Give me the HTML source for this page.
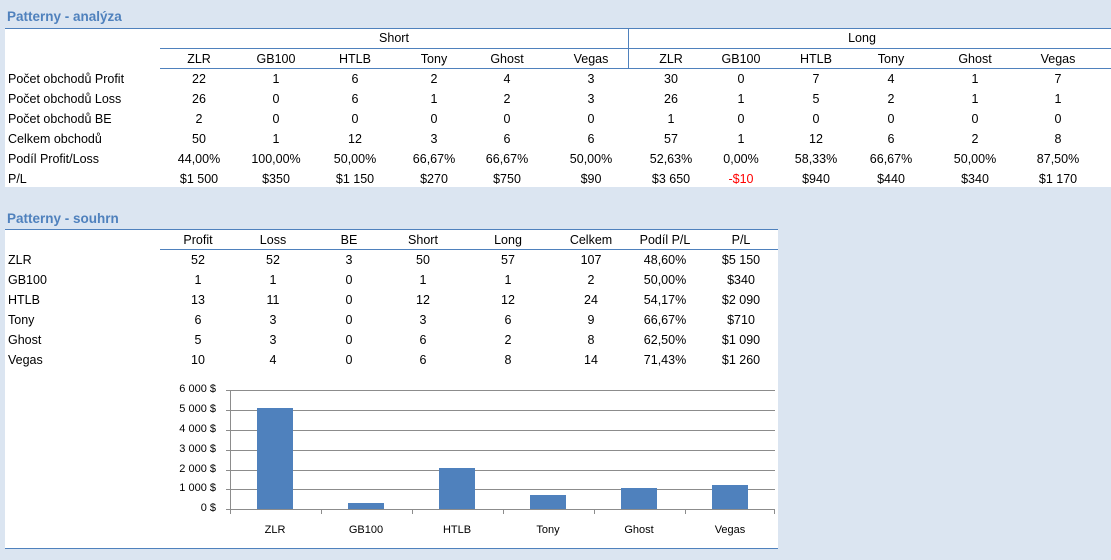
<!DOCTYPE html><html><head><meta charset="utf-8"><style>
body{margin:0;width:1111px;height:560px;background:#dbe5f1;font-family:"Liberation Sans",sans-serif;font-size:12.5px;color:#000;position:relative;overflow:hidden}
.a{position:absolute;white-space:nowrap}
.c{position:absolute;width:80px;text-align:center;white-space:nowrap}
.t{position:absolute;color:#4f81bd;font-weight:bold;font-size:13.5px}
.w{position:absolute;background:#fff}
.l{position:absolute;background:#4f81bd}
.g{position:absolute;background:#8c8c8c;height:1px}
.b{position:absolute;background:#4f81bd}
.y{position:absolute;width:60px;text-align:right;font-size:11px;left:156px}
.x{position:absolute;width:80px;text-align:center;font-size:11px;top:524px}
</style></head><body>
<div class="t" style="left:7px;top:9px">Patterny - analýza</div>
<div class="w" style="left:5px;top:28px;width:1106px;height:159px"></div>
<div class="l" style="left:5px;top:28px;width:1106px;height:1px"></div>
<div class="l" style="left:160px;top:48px;width:951px;height:1px"></div>
<div class="l" style="left:160px;top:68px;width:951px;height:1px"></div>
<div class="l" style="left:628px;top:28px;width:1px;height:41px"></div>
<div class="c" style="left:354px;top:31px">Short</div>
<div class="c" style="left:822px;top:31px">Long</div>

<div class="w" style="left:5px;top:229px;width:773px;height:319px"></div>
<div class="l" style="left:5px;top:229px;width:773px;height:1px"></div>
<div class="l" style="left:160px;top:249px;width:618px;height:1px"></div>
<div class="l" style="left:5px;top:548px;width:773px;height:1px"></div>
<div class="t" style="left:7px;top:211px">Patterny - souhrn</div>

<div class="a" style="left:8px;top:69px;line-height:20px">Počet obchodů Profit<br>Počet obchodů Loss<br>Počet obchodů BE<br>Celkem obchodů<br>Podíl Profit/Loss<br>P/L</div>
<div class="c" style="left:159px;top:49px;line-height:20px">ZLR<br>22<br>26<br>2<br>50<br>44,00%<br>$1 500</div>
<div class="c" style="left:236px;top:49px;line-height:20px">GB100<br>1<br>0<br>0<br>1<br>100,00%<br>$350</div>
<div class="c" style="left:315px;top:49px;line-height:20px">HTLB<br>6<br>6<br>0<br>12<br>50,00%<br>$1 150</div>
<div class="c" style="left:394px;top:49px;line-height:20px">Tony<br>2<br>1<br>0<br>3<br>66,67%<br>$270</div>
<div class="c" style="left:467px;top:49px;line-height:20px">Ghost<br>4<br>2<br>0<br>6<br>66,67%<br>$750</div>
<div class="c" style="left:551px;top:49px;line-height:20px">Vegas<br>3<br>3<br>0<br>6<br>50,00%<br>$90</div>
<div class="c" style="left:631px;top:49px;line-height:20px">ZLR<br>30<br>26<br>1<br>57<br>52,63%<br>$3 650</div>
<div class="c" style="left:701px;top:49px;line-height:20px">GB100<br>0<br>1<br>0<br>1<br>0,00%<br><span style="color:#f00">-$10</span></div>
<div class="c" style="left:776px;top:49px;line-height:20px">HTLB<br>7<br>5<br>0<br>12<br>58,33%<br>$940</div>
<div class="c" style="left:851px;top:49px;line-height:20px">Tony<br>4<br>2<br>0<br>6<br>66,67%<br>$440</div>
<div class="c" style="left:935px;top:49px;line-height:20px">Ghost<br>1<br>1<br>0<br>2<br>50,00%<br>$340</div>
<div class="c" style="left:1018px;top:49px;line-height:20px">Vegas<br>7<br>1<br>0<br>8<br>87,50%<br>$1 170</div>

<div class="a" style="left:8px;top:250px;line-height:20px">ZLR<br>GB100<br>HTLB<br>Tony<br>Ghost<br>Vegas</div>
<div class="c" style="left:158px;top:230px;line-height:20px">Profit<br>52<br>1<br>13<br>6<br>5<br>10</div>
<div class="c" style="left:233px;top:230px;line-height:20px">Loss<br>52<br>1<br>11<br>3<br>3<br>4</div>
<div class="c" style="left:309px;top:230px;line-height:20px">BE<br>3<br>0<br>0<br>0<br>0<br>0</div>
<div class="c" style="left:383px;top:230px;line-height:20px">Short<br>50<br>1<br>12<br>3<br>6<br>6</div>
<div class="c" style="left:468px;top:230px;line-height:20px">Long<br>57<br>1<br>12<br>6<br>2<br>8</div>
<div class="c" style="left:551px;top:230px;line-height:20px">Celkem<br>107<br>2<br>24<br>9<br>8<br>14</div>
<div class="c" style="left:625px;top:230px;line-height:20px">Podíl P/L<br>48,60%<br>50,00%<br>54,17%<br>66,67%<br>62,50%<br>71,43%</div>
<div class="c" style="left:701px;top:230px;line-height:20px">P/L<br>$5 150<br>$340<br>$2 090<br>$710<br>$1 090<br>$1 260</div>

<div class="g" style="left:226px;top:390px;width:549px"></div>
<div class="g" style="left:226px;top:410px;width:549px"></div>
<div class="g" style="left:226px;top:430px;width:549px"></div>
<div class="g" style="left:226px;top:450px;width:549px"></div>
<div class="g" style="left:226px;top:470px;width:549px"></div>
<div class="g" style="left:226px;top:489px;width:549px"></div>
<div class="g" style="left:226px;top:509px;width:549px"></div>
<div class="g" style="left:230px;top:390px;width:1px;height:119px"></div>
<div class="g" style="left:230px;top:509px;width:1px;height:5px"></div>
<div class="g" style="left:321px;top:509px;width:1px;height:5px"></div>
<div class="g" style="left:412px;top:509px;width:1px;height:5px"></div>
<div class="g" style="left:503px;top:509px;width:1px;height:5px"></div>
<div class="g" style="left:594px;top:509px;width:1px;height:5px"></div>
<div class="g" style="left:685px;top:509px;width:1px;height:5px"></div>
<div class="g" style="left:774px;top:509px;width:1px;height:5px"></div>
<div class="y" style="top:383px">6 000 $</div>
<div class="y" style="top:403px">5 000 $</div>
<div class="y" style="top:423px">4 000 $</div>
<div class="y" style="top:443px">3 000 $</div>
<div class="y" style="top:463px">2 000 $</div>
<div class="y" style="top:482px">1 000 $</div>
<div class="y" style="top:502px">0 $</div>
<div class="b" style="left:257px;top:408px;width:36px;height:101px"></div>
<div class="b" style="left:348px;top:503px;width:36px;height:6px"></div>
<div class="b" style="left:439px;top:468px;width:36px;height:41px"></div>
<div class="b" style="left:530px;top:495px;width:36px;height:14px"></div>
<div class="b" style="left:621px;top:488px;width:36px;height:21px"></div>
<div class="b" style="left:712px;top:485px;width:36px;height:24px"></div>
<div class="x" style="left:235px">ZLR</div>
<div class="x" style="left:326px">GB100</div>
<div class="x" style="left:417px">HTLB</div>
<div class="x" style="left:508px">Tony</div>
<div class="x" style="left:599px">Ghost</div>
<div class="x" style="left:690px">Vegas</div>
</body></html>
